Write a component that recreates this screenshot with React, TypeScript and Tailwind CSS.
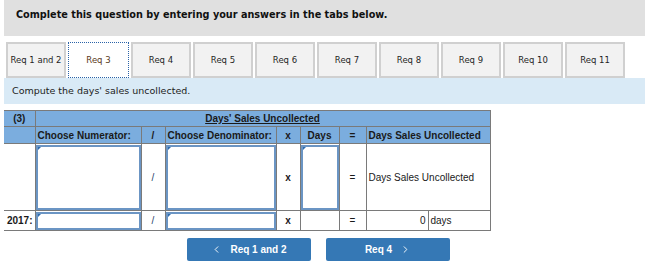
import { ChevronLeft, ChevronRight } from "lucide-react";

const tabs = ["Req 1 and 2", "Req 3", "Req 4", "Req 5", "Req 6", "Req 7", "Req 8", "Req 9", "Req 10", "Req 11"];

function AnswerBox({ tall }: { tall?: boolean }) {
  return (
    <div className={`relative bg-white border-2 border-[#6b95c4] ${tall ? "h-[65px]" : "h-[18px]"}`}>
      <span className="absolute left-0 top-0 h-0 w-0 border-t-[3px] border-r-[3px] border-t-[#2f6db0] border-r-transparent" />
    </div>
  );
}

export default function App() {
  const cell = "border border-[#7a7a7a]";
  const head = "border border-[#7a7a7a] bg-[#7badde] font-bold text-[#1a1a1a]";

  return (
    <div className="w-[645px] h-[274px] bg-white overflow-hidden" style={{ fontFamily: "'DejaVu Sans', Verdana, sans-serif" }}>
      <div className="ml-[4px] h-[36px] bg-[#e0e0e0] pl-[12px] pt-[8px] text-[9.7px] font-bold text-[#111]">
        Complete this question by entering your answers in the tabs below.
      </div>

      <div className="mt-[6px] ml-[6px] flex gap-[2px]">
        {tabs.map((t, i) =>
          i === 1 ? (
            <div
              key={t}
              className="flex h-[36px] w-[61px] items-center justify-center border border-dotted border-[#2b63a8] bg-white text-[8.5px] text-[#5a3a1a]"
            >
              {t}
            </div>
          ) : (
            <div
              key={t}
              className="flex h-[36px] w-[60px] items-center justify-center border-2 border-[#d0d0d0] bg-[#f2f2f2] text-[8.5px] text-[#1f1f1f]"
            >
              {t}
            </div>
          )
        )}
      </div>

      <div className="ml-[4px] flex h-[26px] items-center bg-[#d9eaf6] pl-[8px] text-[9.5px] text-[#222]">
        Compute the days' sales uncollected.
      </div>

      <table
        className="mt-[6px] ml-[4px] border-collapse text-[10px] text-[#1a1a1a]"
        style={{ fontFamily: "'Liberation Sans', Arial, sans-serif" }}
      >
        <colgroup>
          <col className="w-[31px]" />
          <col className="w-[106px]" />
          <col className="w-[24px]" />
          <col className="w-[111px]" />
          <col className="w-[24px]" />
          <col className="w-[39px]" />
          <col className="w-[27px]" />
          <col className="w-[62px]" />
          <col className="w-[62px]" />
        </colgroup>
        <tbody>
          <tr className="h-[16px]">
            <td className={`${head} border-l-0 text-center`}>(3)</td>
            <td colSpan={8} className={`${head} text-center underline`}>
              Days' Sales Uncollected
            </td>
          </tr>
          <tr className="h-[17px]">
            <td className={`${head} border-l-0`} />
            <td className={`${head} pl-[2px] text-left`}>Choose Numerator:</td>
            <td className={`${head} text-center`}>/</td>
            <td className={`${head} pl-[2px] text-left`}>Choose Denominator:</td>
            <td className={`${head} text-center`}>x</td>
            <td className={`${head} text-center`}>Days</td>
            <td className={`${head} text-center`}>=</td>
            <td colSpan={2} className={`${head} pl-[2px] text-left`}>
              Days Sales Uncollected
            </td>
          </tr>
          <tr className="h-[67px]">
            <td className="border-0 border-b border-[#7a7a7a]" />
            <td className={`${cell} p-0`}>
              <AnswerBox tall />
            </td>
            <td className={`${cell} text-center text-[#2a3d6a]`}>/</td>
            <td className={`${cell} p-0`}>
              <AnswerBox tall />
            </td>
            <td className={`${cell} text-center font-bold`}>x</td>
            <td className={`${cell} p-0`}>
              <AnswerBox tall />
            </td>
            <td className={`${cell} text-center`}>=</td>
            <td colSpan={2} className={`${cell} pl-[2px] text-left`}>
              Days Sales Uncollected
            </td>
          </tr>
          <tr className="h-[20px]">
            <td className="border-0 border-b border-[#7a7a7a] pr-[2px] text-right font-bold">2017:</td>
            <td className={`${cell} p-0`}>
              <AnswerBox />
            </td>
            <td className={`${cell} text-center text-[#2a3d6a]`}>/</td>
            <td className={`${cell} p-0`}>
              <AnswerBox />
            </td>
            <td className={`${cell} text-center font-bold`}>x</td>
            <td className={cell} />
            <td className={`${cell} text-center`}>=</td>
            <td className={`${cell} pr-[2px] text-right`}>0</td>
            <td className={`${cell} pl-[2px] text-left`}>days</td>
          </tr>
        </tbody>
      </table>

      <div className="mt-[7px] flex gap-[15px] pl-[187px]" style={{ fontFamily: "'Liberation Sans', Arial, sans-serif" }}>
        <button className="flex h-[23px] w-[124px] items-center justify-center gap-[8px] rounded-[2px] bg-[#3578b5] text-[10px] font-bold text-white">
          <ChevronLeft size={11} strokeWidth={2} />
          Req 1 and 2
        </button>
        <button className="flex h-[23px] w-[124px] items-center justify-center gap-[8px] rounded-[2px] bg-[#3578b5] text-[10px] font-bold text-white">
          Req 4
          <ChevronRight size={11} strokeWidth={2} />
        </button>
      </div>
    </div>
  );
}
